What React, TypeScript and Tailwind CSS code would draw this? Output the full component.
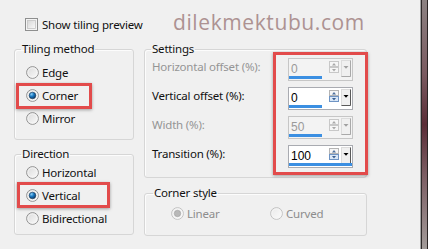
import React from "react";

function Radio({ checked = false, disabled = false }: { checked?: boolean; disabled?: boolean }) {
  const id = React.useId().replace(/:/g, "");
  return (
    <svg width="13" height="13" viewBox="0 0 13 13" className="shrink-0">
      <defs>
        <linearGradient id={`rb${id}`} x1="0" y1="0" x2="1" y2="1">
          <stop offset="0" stopColor={disabled ? "#e8e8e8" : "#d9d9d9"} />
          <stop offset="1" stopColor="#fcfcfc" />
        </linearGradient>
        <radialGradient id={`rd${id}`} cx="0.35" cy="0.3" r="0.75">
          <stop offset="0" stopColor="#8fd0f6" />
          <stop offset="0.45" stopColor="#1b7bc4" />
          <stop offset="1" stopColor="#0a3560" />
        </radialGradient>
      </defs>
      <circle cx="6.5" cy="6.5" r="5.9" fill={`url(#rb${id})`} stroke={disabled ? "#c2c2c2" : "#939393"} strokeWidth="1" />
      <circle cx="6.5" cy="6.5" r="4.6" fill="none" stroke="#f6f6f6" strokeWidth="0.8" />
      {checked && !disabled && <circle cx="6.5" cy="6.5" r="3.3" fill={`url(#rd${id})`} stroke="#1d3b5a" strokeWidth="0.6" />}
      {checked && disabled && <circle cx="6.5" cy="6.5" r="3.2" fill="#b8b8b8" stroke="#a0a0a0" strokeWidth="0.6" />}
    </svg>
  );
}

function Checkbox() {
  return (
    <svg width="13" height="13" viewBox="0 0 13 13" className="shrink-0">
      <defs>
        <linearGradient id="cbg" x1="0" y1="0" x2="1" y2="1">
          <stop offset="0" stopColor="#d6d6d6" />
          <stop offset="1" stopColor="#fafafa" />
        </linearGradient>
      </defs>
      <rect x="0.5" y="0.5" width="12" height="12" fill="#f4f4f4" stroke="#8e8f8f" />
      <rect x="2.5" y="2.5" width="8" height="8" fill="url(#cbg)" stroke="#c4c4c4" strokeWidth="0.8" />
    </svg>
  );
}

function RadioRow({ label, checked, disabled }: { label: string; checked?: boolean; disabled?: boolean }) {
  return (
    <div className="flex items-center h-[23px] gap-[3px]">
      <Radio checked={checked} disabled={disabled} />
      <span className={`leading-[16px] ${disabled ? "text-[#8d8d8d]" : "text-[#111]"}`}>{label}</span>
    </div>
  );
}

function Spin({ value, disabled = false, bar }: { value: string; disabled?: boolean; bar: number }) {
  return (
    <div
      className={`relative flex w-[65px] h-[23px] border ${
        disabled ? "border-[#c6c6c6] bg-[#f3f3f3]" : "border-[#a9abb1] bg-white"
      }`}
    >
      <span
        className={`pl-[2px] pt-[2px] leading-[16px] text-[12px] tracking-normal font-['Liberation_Sans',sans-serif] ${
          disabled ? "text-[#9a9a9a]" : "text-black"
        }`}
      >
        {value}
      </span>
      <svg width="23" height="17" viewBox="0 0 23 17" className="ml-auto mt-[1px]">
        <rect x="0.5" y="1.5" width="9" height="5" fill="#f6f6f6" stroke={disabled ? "#c8c8c8" : "#b4b4b4"} />
        <path d="M3 5.5 L5 3 L7 5.5 Z" fill={disabled ? "#a8a8a8" : "#4d6f9c"} />
        <rect
          x="0.5"
          y="7.5"
          width="9"
          height="5"
          fill={disabled ? "#f6f6f6" : "#d9e7f7"}
          stroke={disabled ? "#c8c8c8" : "#6f94c4"}
        />
        <path d="M3 9 L7 9 L5 11.5 Z" fill={disabled ? "#a8a8a8" : "#3a5f91"} />
        <rect x="12.5" y="0.5" width="9" height="16" fill="#f0f0f0" stroke="#dcdcdc" />
        <path d="M21.5 0.5 V16.5 H12.5" fill="none" stroke={disabled ? "#a9a9a9" : "#5a5a5a"} />
        <path d="M14.5 6 L19.5 6 L17 8.7 Z" fill={disabled ? "#a0a0a0" : "#000"} />
      </svg>
      <div className="absolute left-0 bottom-[1px] h-[3px] bg-[#3b8fe2]" style={{ width: bar }} />
    </div>
  );
}

function Legend({ children, ml = "ml-[6px]" }: { children: React.ReactNode; ml?: string }) {
  return <legend className={`${ml} px-[1px] leading-[16px] text-[#111]`}>{children}</legend>;
}

const fs = "border border-[#d6d6d6] rounded-[3px] shadow-[inset_1px_1px_0_#fcfcfc] p-0 m-0 min-w-0";

function SettingRow({ label, value, disabled, bar }: { label: string; value: string; disabled?: boolean; bar: number }) {
  return (
    <div className="flex items-start h-[23px]">
      <span className={`pl-[7px] pt-[1px] leading-[16px] ${disabled ? "text-[#959595]" : "text-[#111]"}`}>{label}</span>
      <div className="ml-auto mr-[13px]">
        <Spin value={value} disabled={disabled} bar={bar} />
      </div>
    </div>
  );
}

export default function App() {
  return (
    <div className="w-[428px] h-[249px] flex bg-[#f0f0f0] overflow-hidden font-['Noto_Sans',sans-serif] text-[11.5px] tracking-[-0.2px]">
      <div className="relative flex-1 flex flex-col">
        <div className="flex items-center h-[13px] mt-[18px] ml-[25px] gap-[4px]">
          <Checkbox />
          <span className="leading-[16px] text-[#111]">Show tiling preview</span>
        </div>

        <div className="flex mt-[10px] ml-[14px] gap-[10px]">
          <div className="flex flex-col w-[120px] gap-[6px]">
            <fieldset className={`${fs} h-[99px]`}>
              <Legend>Tiling method</Legend>
              <div className="flex flex-col pl-[11px] pt-[4px]">
                <RadioRow label="Edge" />
                <RadioRow label="Corner" checked />
                <RadioRow label="Mirror" />
              </div>
            </fieldset>
            <fieldset className={`${fs} h-[89px]`}>
              <Legend>Direction</Legend>
              <div className="flex flex-col pl-[11px] -mt-[1px]">
                <RadioRow label="Horizontal" />
                <RadioRow label="Vertical" checked />
                <RadioRow label="Bidirectional" />
              </div>
            </fieldset>
          </div>

          <div className="flex flex-col w-[223px] gap-[7px]">
            <fieldset className={`${fs} h-[137px]`}>
              <Legend>Settings</Legend>
              <div className="flex flex-col gap-[6px] pt-[1px]">
                <SettingRow label="Horizontal offset (%):" value="0" disabled bar={33} />
                <SettingRow label="Vertical offset (%):" value="0" bar={33} />
                <SettingRow label="Width (%):" value="50" disabled bar={33} />
                <SettingRow label="Transition (%):" value="100" bar={63} />
              </div>
            </fieldset>
            <fieldset className={`${fs} h-[51px]`}>
              <Legend ml="ml-[8px]">Corner style</Legend>
              <div className="flex pl-[26px] pt-[1px]">
                <div className="w-[99px]">
                  <RadioRow label="Linear" checked disabled />
                </div>
                <RadioRow label="Curved" disabled />
              </div>
            </fieldset>
          </div>
        </div>

        {/* watermark */}
        <div className="absolute left-[173px] top-[8px] text-[21px] leading-[28px] text-[#ad9292] font-['Open_Sans',sans-serif] tracking-[0.6px] pointer-events-none">
          dilekmektubu.com
        </div>

        {/* red highlights */}
        <div className="absolute left-[16px] top-[83px] w-[76px] h-[26px] border-[3px] border-[#e24b4b] shadow-[0_1px_3px_rgba(0,0,0,0.35)]" />
        <div className="absolute left-[17px] top-[182px] w-[93px] h-[26px] border-[3px] border-[#e24b4b] shadow-[0_1px_3px_rgba(0,0,0,0.35)]" />
        <div className="absolute left-[273px] top-[52px] w-[95px] h-[123px] border-[3px] border-[#e24b4b] shadow-[0_1px_3px_rgba(0,0,0,0.35)]" />
      </div>

      {/* window edge */}
      <div className="flex w-[8px] h-full">
        <div className="w-[1px] bg-[#a3a3a3]" />
        <div className="w-[1px] bg-[#2f2a2a]" />
        <div className="w-[5px] bg-[linear-gradient(to_bottom,#8c8282_0%,#7a5a60_30%,#5a2c36_50%,#7b5c62_70%,#a29b99_100%)]" />
        <div className="w-[1px] bg-[#2a2424]" />
      </div>
    </div>
  );
}
